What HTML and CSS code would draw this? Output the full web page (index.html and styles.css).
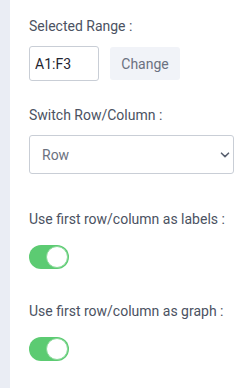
FILE: index.html
```html
<!DOCTYPE html>
<html lang="en">
<head>
    <meta charset="UTF-8">
    <meta name="viewport" content="width=device-width, initial-scale=1.0">
    <title>Chart Settings</title>
    <link rel="stylesheet" href="styles.css">
</head>
<body>

    <div class="layout">
        <div class="side-strip"></div>

        <div class="panel">
            <div class="field">
                <label class="field-label" for="range">Selected Range :</label>
                <div class="range-row">
                    <input type="text" id="range" class="range-input" value="A1:F3">
                    <button class="change-btn">Change</button>
                </div>
            </div>

            <div class="field field-select">
                <label class="field-label" for="switch">Switch Row/Column :</label>
                <div class="select-wrap">
                    <select id="switch" class="select">
                        <option>Row</option>
                        <option>Column</option>
                    </select>
                    <svg class="chevron" width="10" height="6" viewBox="0 0 10 6">
                        <path d="M1.5 1.2 L5 4.6 L8.5 1.2" fill="none" stroke="#5a6170" stroke-width="1.6" stroke-linecap="round" stroke-linejoin="round"/>
                    </svg>
                </div>
            </div>

            <div class="field field-toggle">
                <div class="field-label">Use first row/column as labels :</div>
                <label class="toggle">
                    <input type="checkbox" checked>
                    <span class="track"></span>
                </label>
            </div>

            <div class="field field-toggle">
                <div class="field-label">Use first row/column as graph :</div>
                <label class="toggle">
                    <input type="checkbox" checked>
                    <span class="track"></span>
                </label>
            </div>
        </div>
    </div>

</body>
</html>
```

FILE: styles.css
```css
/* Chart settings side panel */
body {
    margin: 0;
    padding: 0;
    font-family: Roboto, "Liberation Sans", sans-serif;
    font-size: 14px;
    color: #4b5262;
    background: #fff;
}

.layout {
    display: flex;
    min-height: 388px;
}

.side-strip {
    width: 10px;
    flex-shrink: 0;
    background: #eaedf4;
}

.panel {
    flex: 1;
    padding: 18px 16px 0 19px;
}

.field {
    margin-bottom: 26px;
}

.field-select {
    margin-bottom: 37px;
}

.field-toggle {
    margin-bottom: 34px;
}

.field-label {
    display: block;
    line-height: 17px;
    margin-bottom: 11px;
}

/* Range input + change button */
.range-row {
    display: flex;
    align-items: center;
    gap: 11px;
}

.range-input {
    width: 70px;
    height: 35px;
    box-sizing: border-box;
    padding: 0 5px;
    border: 1px solid #c9ced6;
    border-radius: 3px;
    font-family: inherit;
    font-size: 14px;
    color: #1f2430;
    outline: none;
}

.change-btn {
    width: 70px;
    height: 33px;
    border: none;
    border-radius: 3px;
    background: #f1f3f8;
    font-family: inherit;
    font-size: 14px;
    color: #6b7180;
    cursor: pointer;
}

/* Select */
.select-wrap {
    position: relative;
}

.select {
    width: 100%;
    height: 39px;
    box-sizing: border-box;
    padding: 0 12px;
    border: 1px solid #c9ced6;
    border-radius: 3px;
    background: #fff;
    font-family: inherit;
    font-size: 14px;
    color: #6b7180;
    appearance: none;
    -webkit-appearance: none;
    outline: none;
}

.chevron {
    position: absolute;
    right: 4px;
    top: 17px;
    pointer-events: none;
}

/* Toggle switch */
.toggle {
    display: block;
    position: relative;
    width: 40px;
    height: 24px;
    margin-top: 17px;
}

.toggle input {
    display: none;
}

.track {
    position: absolute;
    inset: 0;
    border-radius: 12px;
    background: #5ccb72;
    cursor: pointer;
}

.track::after {
    content: "";
    position: absolute;
    right: 1px;
    top: 1px;
    width: 20px;
    height: 20px;
    border-radius: 50%;
    background: #fff;
    border: 1px solid #8ad99a;
}
```
